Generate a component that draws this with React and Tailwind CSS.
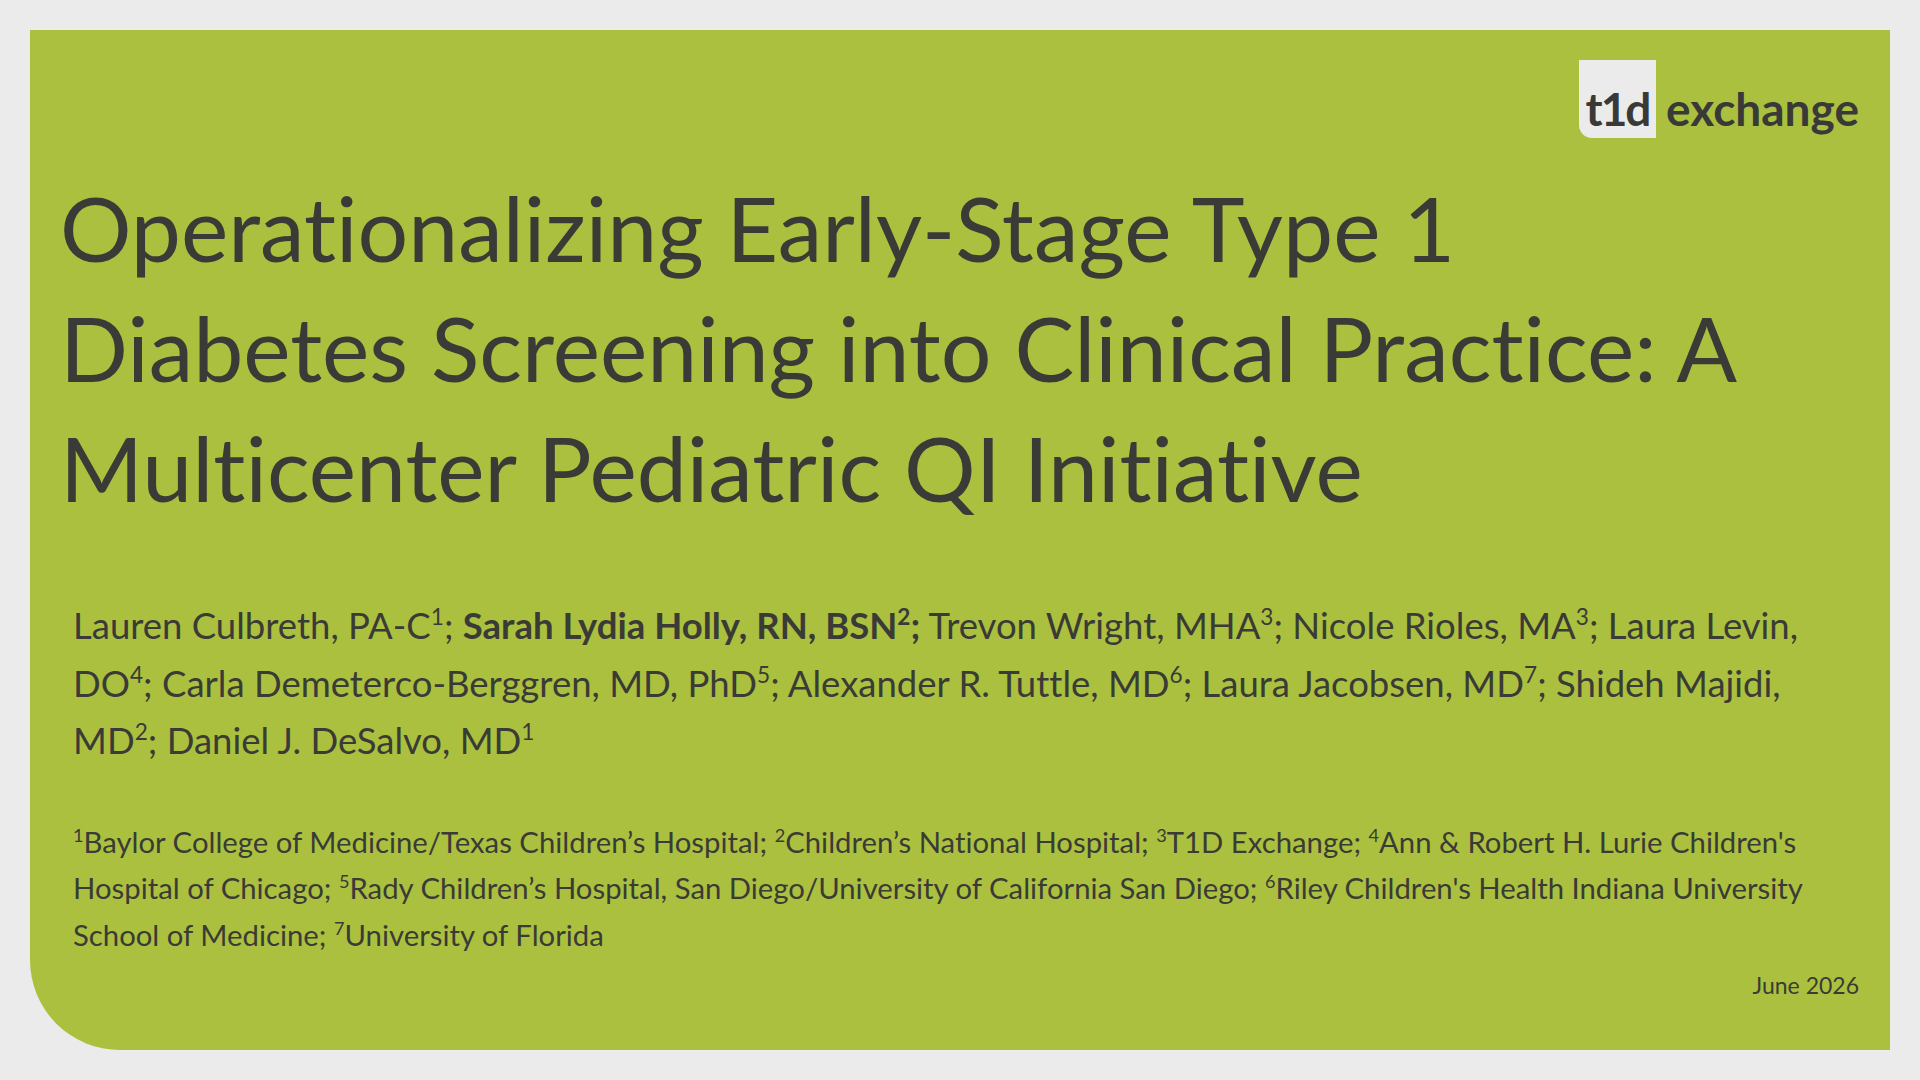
import React from 'react';

const FONT = { fontFamily: 'Lato, "Open Sans", sans-serif' };

function Sup({ children }) {
  return <sup className="text-[0.62em] top-[-0.6em]">{children}</sup>;
}

function Logo() {
  return (
    <div className="flex items-baseline gap-[10px]">
      <div className="flex h-[78px] w-[77px] items-end justify-center rounded-bl-[13px] bg-[#ebebeb] pb-[6px]">
        <span className="text-[46px] font-bold leading-[46px] tracking-[-2px] text-[#393a37]">t1d</span>
      </div>
      <span className="text-[46px] font-bold leading-[46px] text-[#393a37]">exchange</span>
    </div>
  );
}

export default function App() {
  return (
    <div className="h-[1080px] w-[1920px] bg-[#ebebeb] p-[30px] [font-variant-ligatures:none]" style={FONT}>
      <div className="flex h-full flex-col rounded-bl-[90px] bg-[#abc03e] text-[#3a3b36]">
        {/* Header / logo */}
        <div className="flex justify-end pt-[30px] pr-[31px]">
          <Logo />
        </div>

        {/* Title */}
        <h1 className="mt-[30px] pl-[30px] text-[89.5px] leading-[120px] font-normal">
          Operationalizing Early-Stage Type 1<br />
          Diabetes Screening into Clinical Practice: A<br />
          Multicenter Pediatric QI Initiative
        </h1>

        {/* Authors */}
        <p className="mt-[69px] pl-[43px] text-[36.5px] leading-[57.5px]">
          Lauren Culbreth, PA-C<Sup>1</Sup>; <strong className="font-bold">Sarah Lydia Holly, RN, BSN<Sup>2</Sup>;</strong> Trevon Wright, MHA<Sup>3</Sup>; Nicole Rioles, MA<Sup>3</Sup>; Laura Levin,<br />
          DO<Sup>4</Sup>; Carla Demeterco-Berggren, MD, PhD<Sup>5</Sup>; Alexander R. Tuttle, MD<Sup>6</Sup>; Laura Jacobsen, MD<Sup>7</Sup>; Shideh Majidi,<br />
          MD<Sup>2</Sup>; Daniel J. DeSalvo, MD<Sup>1</Sup>
        </p>

        {/* Affiliations */}
        <p className="mt-[49px] pl-[43px] text-[29.3px] leading-[46.5px]">
          <Sup>1</Sup>Baylor College of Medicine/Texas Children’s Hospital; <Sup>2</Sup>Children’s National Hospital; <Sup>3</Sup>T1D Exchange; <Sup>4</Sup>Ann &amp; Robert H. Lurie Children's<br />
          Hospital of Chicago; <Sup>5</Sup>Rady Children’s Hospital, San Diego/University of California San Diego; <Sup>6</Sup>Riley Children's Health Indiana University<br />
          School of Medicine; <Sup>7</Sup>University of Florida
        </p>

        {/* Date */}
        <div className="mt-[13px] flex justify-end pr-[31px] text-[23px] leading-[28px]">
          June 2026
        </div>
      </div>
    </div>
  );
}
